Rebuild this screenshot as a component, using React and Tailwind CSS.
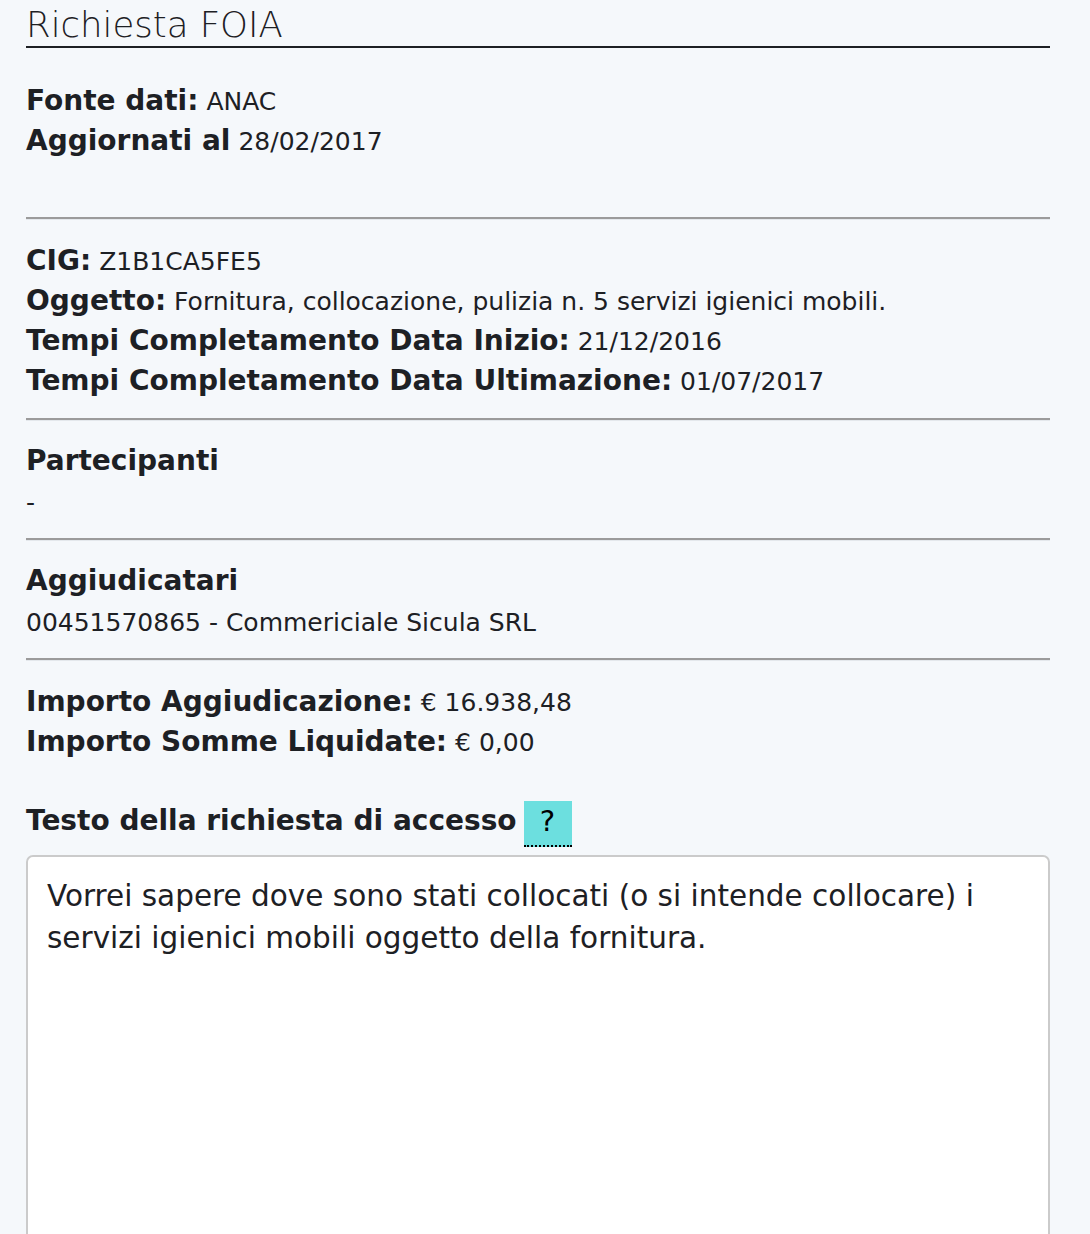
import React from "react";

const F = { fontFamily: '"DejaVu Sans", "Noto Sans", sans-serif' };

function Hr({ className = "" }) {
  return <div className={"border-t-2 border-b border-t-[#9b9b9b] border-b-[#e4e8ec] " + className} />;
}

function Row({ label, value }) {
  return (
    <div className="flex items-baseline gap-[8px] h-[40px] whitespace-nowrap">
      <span className="font-bold text-[28px] leading-[40px]">{label}</span>
      <span className="text-[25px] leading-[40px]">{value}</span>
    </div>
  );
}

export default function App() {
  return (
    <div style={F} className="min-h-[1234px] bg-[#f5f8fb] text-[#1d2024] pl-[26px] pr-[40px] overflow-hidden">
      <h1 className="text-[35.5px] font-light leading-[42px] pt-[4px] border-b-2 border-[#1d2024]">Richiesta FOIA</h1>

      <div className="mt-[33px]">
        <Row label="Fonte dati:" value="ANAC" />
        <Row label="Aggiornati al" value="28/02/2017" />
      </div>

      <Hr className="mt-[56px]" />

      <div className="mt-[21px]">
        <Row label="CIG:" value="Z1B1CA5FE5" />
        <Row label="Oggetto:" value="Fornitura, collocazione, pulizia n. 5 servizi igienici mobili." />
        <Row label="Tempi Completamento Data Inizio:" value="21/12/2016" />
        <Row label="Tempi Completamento Data Ultimazione:" value="01/07/2017" />
      </div>

      <Hr className="mt-[17px]" />

      <div className="mt-[20px]">
        <div className="font-bold text-[28px] leading-[40px] mb-[2px]">Partecipanti</div>
        <div className="text-[25px] leading-[40px]">-</div>
      </div>

      <Hr className="mt-[15px]" />

      <div className="mt-[20px]">
        <div className="font-bold text-[28px] leading-[40px] mb-[2px]">Aggiudicatari</div>
        <div className="text-[25px] leading-[40px]">00451570865 - Commericiale Sicula SRL</div>
      </div>

      <Hr className="mt-[15px]" />

      <div className="mt-[21px]">
        <Row label="Importo Aggiudicazione:" value="€ 16.938,48" />
        <Row label="Importo Somme Liquidate:" value="€ 0,00" />
      </div>

      <div className="mt-[39px] flex items-start">
        <span className="font-bold text-[28px] leading-[40px]">Testo della richiesta di accesso</span>
        <span className="ml-[7px] w-[48px] h-[46px] bg-[#6cdfdf] border-b-2 border-dotted border-black text-black text-[29px] leading-[40px] text-center">?</span>
      </div>

      <div className="mt-[8px] h-[420px] bg-white border-2 border-[#cbcbcb] rounded-[7px] pt-[18px] pl-[19px] pr-[20px] text-[29.5px] leading-[42px]">
        Vorrei sapere dove sono stati collocati (o si intende collocare) i servizi igienici mobili oggetto della fornitura.
      </div>
    </div>
  );
}
